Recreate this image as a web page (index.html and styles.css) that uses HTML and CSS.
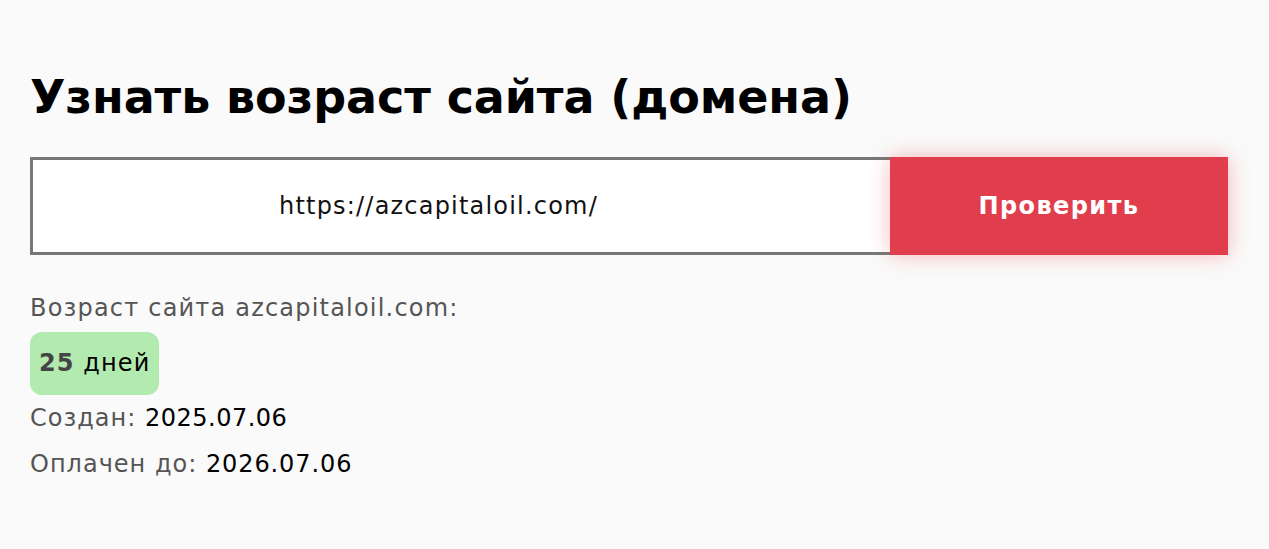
FILE: index.html
```html
<!DOCTYPE html>
<html lang="ru">
<head>
<meta charset="utf-8">
<title>Узнать возраст сайта</title>
<link rel="stylesheet" href="styles.css">
</head>
<body>
<main class="page">
  <h1 class="title">Узнать возраст сайта (домена)</h1>
  <form class="check-form">
    <div class="url-input">https://azcapitaloil.com/</div>
    <button type="button" class="check-btn">Проверить</button>
  </form>
  <div class="result">
    <div class="result-label">Возраст сайта azcapitaloil.com:</div>
    <div class="age-badge"><b class="age-num">25</b> дней</div>
    <div class="result-row">Создан: <span class="val">2025.07.06</span></div>
    <div class="result-row">Оплачен до: <span class="val">2026.07.06</span></div>
  </div>
</main>
</body>
</html>
```

FILE: styles.css
```css
html, body {
  margin: 0;
  padding: 0;
  background: #fafafa;
}
body {
  font-family: "DejaVu Sans", "Noto Sans", sans-serif;
  color: #000;
}
.page {
  padding: 62px 41px 0 30px;
}
.title {
  margin: 0;
  font-size: 46px;
  font-weight: 700;
  line-height: 70px;
  letter-spacing: -0.1px;
}
.check-form {
  margin-top: 25px;
  display: flex;
  width: 1198px;
  height: 98px;
}
.url-input {
  flex: 1;
  box-sizing: border-box;
  border: 3px solid #777;
  border-right: none;
  padding-right: 46px;
  background: #fff;
  display: flex;
  align-items: center;
  justify-content: center;
  font-size: 24px;
  letter-spacing: 1.2px;
  color: #111;
}
.check-btn {
  width: 338px;
  border: none;
  background: #e03d4d;
  color: #fff;
  font-family: inherit;
  font-size: 24px;
  letter-spacing: 1.4px;
  font-weight: 700;
  box-shadow: 0 0 20px rgba(240, 60, 70, 0.35);
}
.result {
  margin-top: 38px;
}
.result-label {
  font-size: 24px;
  letter-spacing: 1.2px;
  color: #555;
  line-height: 30px;
}
.age-badge {
  display: inline-block;
  margin-top: 9px;
  padding: 0 9px;
  height: 63px;
  line-height: 63px;
  border-radius: 12px;
  background: #b3eab0;
  font-size: 24px;
  letter-spacing: 1.1px;
}
.age-num {
  color: #444;
}
.result-row {
  font-size: 24px;
  letter-spacing: 1px;
  color: #555;
  line-height: 46px;
}
.val {
  color: #000;
  letter-spacing: 0.5px;
}
.result-row + .result-row .val {
  letter-spacing: 0.9px;
}
```
